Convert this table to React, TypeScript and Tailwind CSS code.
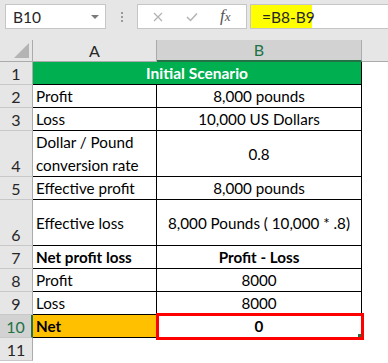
import React from 'react';

type Row = {
  n: number;
  h: 'short' | 'tall';
  a?: React.ReactNode;
  b?: React.ReactNode;
  bold?: boolean;
};

const rows: Row[] = [
  { n: 2, h: 'short', a: 'Profit', b: '8,000 pounds' },
  { n: 3, h: 'short', a: 'Loss', b: '10,000 US Dollars' },
  {
    n: 4,
    h: 'tall',
    a: (
      <>
        Dollar / Pound
        <br />
        conversion rate
      </>
    ),
    b: '0.8',
  },
  { n: 5, h: 'short', a: 'Effective profit', b: '8,000 pounds' },
  { n: 6, h: 'tall', a: 'Effective loss', b: '8,000 Pounds ( 10,000 * .8)' },
  { n: 7, h: 'short', a: 'Net profit loss', b: 'Profit - Loss', bold: true },
  { n: 8, h: 'short', a: 'Profit', b: '8000' },
  { n: 9, h: 'short', a: 'Loss', b: '8000' },
];

const RowHeader: React.FC<{ n: number; tall?: boolean; active?: boolean }> = ({ n, tall, active }) => (
  <div
    className={
      'flex items-end justify-center pb-[1px] text-[16px] border-b border-[#c8c8c8] ' +
      (tall ? 'h-[46px] ' : 'h-[23px] ') +
      (active
        ? 'bg-[#d2d2d2] text-[#217346] border-r-2 border-r-[#217346]'
        : 'bg-[#e6e6e6] text-[#262626] border-r border-r-[#ababab]')
    }
  >
    {n}
  </div>
);

export default function App() {
  return (
    <div className="w-[388px] h-[363px] overflow-hidden bg-white text-[15.2px] leading-[18px] text-black [font-family:Lato,'Open_Sans',sans-serif]">
      {/* Toolbar */}
      <div className="h-[40px] bg-[#e6e6e6] flex items-start pt-[4px]">
        <div className="ml-[5px] w-[101px] h-[25px] bg-white border border-[#c6c6c6] flex items-center pl-[7px] pr-[6px] text-[#262626] text-[15.5px]">
          <span className="flex-1">B10</span>
          <span className="w-0 h-0 border-l-[4px] border-r-[4px] border-t-[4px] border-l-transparent border-r-transparent border-t-[#7a7a7a]" />
        </div>
        <div className="w-[31px] h-[25px] flex flex-col items-center justify-center gap-[2px]">
          <span className="w-[2px] h-[2px] bg-[#9a9a9a]" />
          <span className="w-[2px] h-[2px] bg-[#9a9a9a]" />
          <span className="w-[2px] h-[2px] bg-[#9a9a9a]" />
        </div>
        <div className="w-[110px] h-[25px] bg-white border border-[#c6c6c6] flex items-center">
          <svg className="ml-[15px]" width="10" height="10" viewBox="0 0 10 10">
            <path d="M1 1L9 9M9 1L1 9" stroke="#b3b3b3" strokeWidth="1.3" />
          </svg>
          <svg className="ml-[23px]" width="12" height="10" viewBox="0 0 12 10">
            <path d="M1 5L4.5 8.5L11 1.5" stroke="#b3b3b3" strokeWidth="1.5" fill="none" />
          </svg>
          <span className="ml-[22px] italic text-[17px] text-[#555] [font-family:'Liberation_Serif',serif]">
            f<span className="text-[13px]">x</span>
          </span>
        </div>
        <div className="ml-[3px] flex-1 h-[25px] bg-white border border-r-0 border-[#c6c6c6] flex">
          <div className="w-[61px] h-full bg-[#ffff00] pl-[11px] flex items-center whitespace-nowrap text-[#262626] text-[15.5px]">
            =B8-B9
          </div>
        </div>
      </div>

      {/* Sheet */}
      <div className="grid grid-cols-[33px_124px_205px_26px]">
        {/* Column headers */}
        <div className="h-[22px] bg-[#e6e6e6] border-r border-b border-[#ababab] flex items-end justify-end pr-[3px] pb-[3px]">
          <span className="w-0 h-0 border-l-[15px] border-b-[15px] border-l-transparent border-b-[#b4b4b4]" />
        </div>
        <div className="h-[22px] bg-[#e6e6e6] border-r border-b border-[#ababab] flex items-center justify-center text-[#262626] text-[16px]">
          A
        </div>
        <div className="h-[22px] bg-[#d2d2d2] border-r border-r-[#ababab] border-b-2 border-b-[#217346] flex items-center justify-center text-[#217346] text-[16px]">
          B
        </div>
        <div className="h-[22px] bg-[#e6e6e6] border-b border-[#ababab]" />

        {/* Row 1 */}
        <RowHeader n={1} />
        <div className="col-span-2 h-[23px] bg-[#00b050] border-b border-r border-black flex items-center justify-center font-bold text-white text-[15.5px]">
          Initial Scenario
        </div>
        <div className="h-[23px]" />

        {rows.map((r) => {
          const tall = r.h === 'tall';
          const h = tall ? 'h-[46px] ' : 'h-[23px] ';
          return (
            <React.Fragment key={r.n}>
              <RowHeader n={r.n} tall={tall} />
              <div
                className={
                  h +
                  'border-b border-r border-black flex items-center pl-[3px] ' +
                  (r.n === 4 ? 'leading-[23px] ' : '') +
                  (r.bold ? 'font-bold' : '')
                }
              >
                <span>{r.a}</span>
              </div>
              <div
                className={
                  h +
                  'border-b border-r border-black flex items-center justify-center whitespace-nowrap ' +
                  (r.bold ? 'font-bold' : '')
                }
              >
                {r.b}
              </div>
              <div className={h} />
            </React.Fragment>
          );
        })}

        {/* Row 10 */}
        <RowHeader n={10} active />
        <div className="h-[23px] bg-[#ffc000] border-b border-r border-black flex items-center pl-[3px] font-bold">Net</div>
        <div className="relative h-[23px] border-b border-r border-black flex items-center justify-center font-bold">
          0
          <div className="absolute -left-[1px] -top-[2px] -right-[3px] -bottom-[3px] border-[3px] border-[#ff0000]" />
          <div className="absolute right-0 bottom-0 w-[3px] h-[3px] bg-[#217346]" />
        </div>
        <div className="h-[23px]" />

        {/* Row 11 */}
        <RowHeader n={11} />
        <div className="h-[23px] col-span-3" />
      </div>
    </div>
  );
}
